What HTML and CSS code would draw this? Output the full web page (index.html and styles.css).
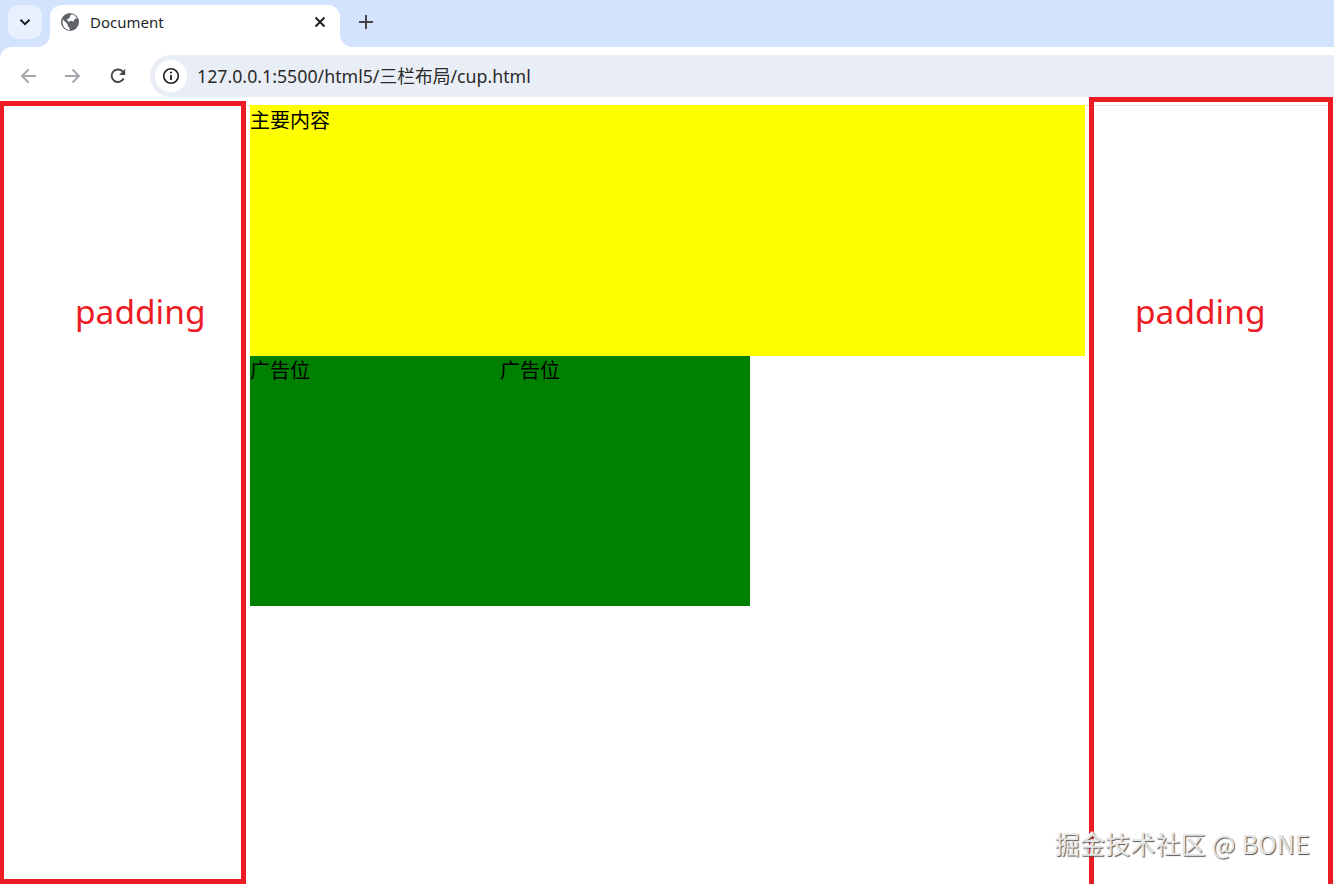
FILE: index.html
```html
<!DOCTYPE html>
<html lang="en">
<head>
<meta charset="UTF-8" />
<meta name="viewport" content="width=device-width, initial-scale=1.0"/>
<title>Document</title>
<link rel="stylesheet" href="styles.css">
</head>

<body>

  <div class="chrome">

    <!-- Browser tab strip -->
    <div class="tabstrip">
      <div class="tab-search">
        <svg width="16" height="16" viewBox="0 0 16 16"><path d="M3.5 5.8 8 10.2l4.5-4.4" fill="none" stroke="#1f1f1f" stroke-width="2"/></svg>
      </div>
      <div class="tab">
        <svg class="tab-globe" width="18" height="18" viewBox="0 0 18 18">
          <circle cx="9" cy="9" r="9" fill="#5f6368"/>
          <path d="M2 6.5 6.5 11l.2 2.2L8.6 15v2.2A8 8 0 0 1 2 6.5zM10 1.6 12.8 1.8 16 5l-2.5 1.2-1 2.2-3-.6-1.6 1.2L5.6 6.6 8 5.4z" fill="#fff"/>
        </svg>
        <span class="tab-title">Document</span>
        <svg class="tab-close" width="12" height="12" viewBox="0 0 12 12"><path d="M1.5 1.5l9 9M10.5 1.5l-9 9" stroke="#1f1f1f" stroke-width="2"/></svg>
      </div>
      <svg class="new-tab" width="14" height="14" viewBox="0 0 14 14"><path d="M7 0v14M0 7h14" stroke="#444" stroke-width="2"/></svg>
    </div>

    <!-- Browser toolbar -->
    <div class="toolbar">
      <div class="nav-icons">
        <svg width="18" height="18" viewBox="0 0 18 18"><path d="M17 9H3M9.5 2.5 3 9l6.500 6.500" fill="none" stroke="#a2a5a9" stroke-width="1.800"/></svg>
        <svg width="18" height="18" viewBox="0 0 18 18"><path d="M1 9h14M8.500 2.500 15 9l-6.500 6.500" fill="none" stroke="#a2a5a9" stroke-width="1.800"/></svg>
        <svg width="18" height="18" viewBox="0 0 18 18"><path d="M14.600 11.500A6.300 6.300 0 1 1 14 5L15.500 6.800" fill="none" stroke="#444746" stroke-width="1.900"/><path d="M16.200 1.800v6.200H10z" fill="#444746"/></svg>
      </div>
      <div class="omnibox">
        <div class="site-info">
          <svg width="18" height="18" viewBox="0 0 18 18"><circle cx="9" cy="9" r="7.300" fill="none" stroke="#1f1f1f" stroke-width="1.600"/><path d="M9 8v5" stroke="#1f1f1f" stroke-width="1.800"/><circle cx="9" cy="5.500" r="1.100" fill="#1f1f1f"/></svg>
        </div>
        <span class="url">127.0.0.1:5500/html5/三栏布局/cup.html</span>
      </div>
    </div>

  </div>

  <!-- Page content -->
  <div class="page">
    <div class="main">主要内容</div>
    <div class="ads">
      <div class="ad">广告位</div>
      <div class="ad">广告位</div>
    </div>
  </div>

  <!-- Annotations drawn over the page -->
  <div class="note note-left"><span class="note-label">padding</span></div>
  <div class="note note-right"><span class="note-label">padding</span></div>
  <div class="watermark">掘金技术社区 @ BONE</div>

</body>
</html>
```

FILE: styles.css
```css
html, body {
  height: 100%;
}

body {
  margin: 0;
  overflow: hidden;
  background-color: white;
  font-family: "Noto Sans CJK SC", "Liberation Sans", sans-serif;
}

.chrome {
  background-color: #d3e3fd;
}

.tabstrip {
  height: 47px;
  display: flex;
  align-items: flex-end;
  padding-left: 8px;
  box-sizing: border-box;
}

.tab-search {
  width: 34px;
  height: 34px;
  margin-bottom: 8px;
  border-radius: 10px;
  background-color: #e8f0fe;
  display: flex;
  justify-content: center;
  align-items: center;
}

.tab {
  position: relative;
  width: 290px;
  height: 42px;
  margin-left: 8px;
  padding: 0 14px 8px 11px;
  box-sizing: border-box;
  background-color: white;
  border-radius: 12px 12px 0 0;
  display: flex;
  align-items: center;
}

.tab::before,
.tab::after {
  content: "";
  position: absolute;
  bottom: 0;
  width: 12px;
  height: 12px;
}

.tab::before {
  left: -12px;
  background: radial-gradient(circle at 0 0, transparent 11.5px, white 12px);
}

.tab::after {
  right: -12px;
  background: radial-gradient(circle at 100% 0, transparent 11.5px, white 12px);
}

.tab-globe {
  flex: none;
}

.tab-title {
  flex: 1;
  margin-left: 11px;
  font-family: "Noto Sans", sans-serif;
  font-size: 15px;
  color: #1f1f1f;
}

.new-tab {
  margin: 0 0 18px 19px;
}

.toolbar {
  height: 50px;
  background-color: white;
  border-radius: 12px 0 0 0;
  display: flex;
  align-items: flex-end;
  box-sizing: border-box;
}

.nav-icons {
  width: 150px;
  height: 42px;
  padding: 0 0 0 19px;
  box-sizing: border-box;
  display: flex;
  align-items: center;
  gap: 27px;
}

.omnibox {
  flex: 1;
  height: 42px;
  background-color: #e9eef6;
  border-radius: 21px 0 0 21px;
  display: flex;
  align-items: center;
  padding-left: 5px;
}

.site-info {
  width: 32px;
  height: 32px;
  border-radius: 50%;
  background-color: white;
  display: flex;
  justify-content: center;
  align-items: center;
}

.url {
  margin: -2px 0 0 10px;
  font-family: "Noto Sans", "Noto Sans CJK SC", sans-serif;
  font-size: 17.75px;
  color: #2a2a2a;
}

.page {
  padding: 8px 0 0 250px;
  background: linear-gradient(#e2e2e2, #e2e2e2) 0 8px / 100% 1px no-repeat;
}

.main {
  width: 835px;
  height: 251px;
  background-color: yellow;
  font-size: 20px;
  line-height: 30px;
  color: black;
}

.ads {
  display: flex;
}

.ad {
  width: 250px;
  height: 250px;
  background-color: green;
  font-size: 20px;
  line-height: 28px;
  color: black;
}

.note {
  position: absolute;
  box-sizing: border-box;
  border: 5px solid #ed1c24;
}

.note-left {
  left: -1px;
  top: 101px;
  width: 247px;
  height: 783px;
}

.note-right {
  left: 1089px;
  top: 97px;
  width: 244px;
  height: 800px;
}

.note-label {
  display: block;
  font-family: "Noto Sans", sans-serif;
  font-size: 33.5px;
  line-height: 46px;
  color: #ed1c24;
}

.note-left .note-label {
  margin: 182px 0 0 71px;
}

.note-right .note-label {
  margin: 186px 0 0 41px;
}

.watermark {
  position: absolute;
  right: 24px;
  top: 825px;
  font-size: 25px;
  line-height: 36px;
  letter-spacing: 0.2px;
  color: #e6e6e6;
  text-shadow: 1px 1px 1px #555, -1px -1px 0 #fff;
  white-space: nowrap;
}
```
